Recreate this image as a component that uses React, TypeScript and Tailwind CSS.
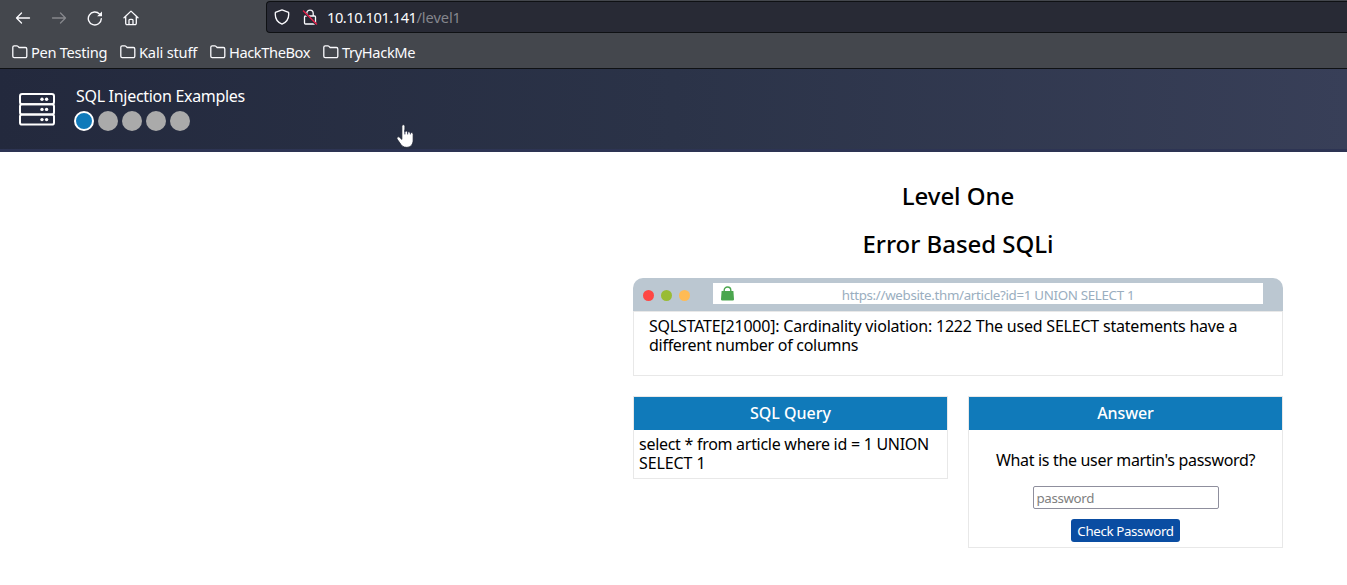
import React from 'react';

const strokeProps = {
  fill: 'none',
  stroke: '#fbfbfe',
  strokeWidth: 1.3,
  strokeLinecap: 'round' as const,
  strokeLinejoin: 'round' as const,
};

function ArrowIcon({ forward = false }: { forward?: boolean }) {
  return (
    <svg width="16" height="16" viewBox="0 0 16 16" {...strokeProps} stroke={forward ? '#86888c' : '#fbfbfe'}>
      {forward ? <path d="M1.500 8h13M9.500 3l5 5-5 5" /> : <path d="M14.500 8H1.500M6.500 3l-5 5 5 5" />}
    </svg>
  );
}

function ReloadIcon() {
  return (
    <svg width="16" height="16" viewBox="0 0 16 16" {...strokeProps} strokeWidth={1.4}>
      <path d="M14.300 8.700A6.500 6.500 0 1 1 12.600 4.100" />
      <path d="M15 1.400v4.900h-4.900z" fill="#fbfbfe" stroke="none" />
    </svg>
  );
}

function HomeIcon() {
  return (
    <svg width="16" height="16" viewBox="0 0 16 16" {...strokeProps}>
      <path d="M1 7.800 8 1.100l7 6.700M2.700 6.600v6.700A1.300 1.300 0 0 0 4 14.600h8a1.300 1.300 0 0 0 1.300-1.300V6.600" />
      <path d="M6 14.300v-4a.9.9 0 0 1 .9-.9h2.200a.9.9 0 0 1 .9.9v4" />
    </svg>
  );
}

function ShieldIcon() {
  return (
    <svg width="16" height="16" viewBox="0 0 16 16" {...strokeProps}>
      <path d="M8 .9 14.600 3.400c.6 4.800-1.300 9.500-6.600 11.800C2.700 12.900.8 8.200 1.400 3.400z" />
    </svg>
  );
}

function InsecureLockIcon() {
  return (
    <svg width="16" height="16" viewBox="0 0 16 16" {...strokeProps}>
      <path d="M4.800 7V4.300a3.200 3.200 0 0 1 6.400 0V7M3.500 7h9a1 1 0 0 1 1 1v6a1 1 0 0 1-1 1h-9a1 1 0 0 1-1-1V8a1 1 0 0 1 1-1z" />
      <path d="M2 3.200 14 15.200" stroke="#282a35" strokeWidth={2.200} />
      <path d="M1.500 2 14.500 15" stroke="#e2214b" strokeWidth={1.500} />
    </svg>
  );
}

function FolderIcon() {
  return (
    <svg width="16" height="14" viewBox="0 0 16 14" {...strokeProps} className="shrink-0">
      <path d="M.8 2.300a1.400 1.400 0 0 1 1.400-1.400h2.700c.5 0 .8.2 1.100.5l1.100 1.100h6.300a1.400 1.400 0 0 1 1.400 1.400v7.300a1.400 1.400 0 0 1-1.400 1.400H2.200A1.400 1.400 0 0 1 .8 11.200z" />
    </svg>
  );
}

function ServerIcon() {
  return (
    <svg width="36" height="33" viewBox="0 0 36 33" fill="none" stroke="#fff" strokeWidth="2" className="shrink-0">
      {[1, 11.2, 21.400].map((y) => (
        <g key={y}>
          <rect x="1" y={y} width="34" height="10.200" rx="2.200" />
          <g fill="#fff" stroke="none">
            <circle cx="23" cy={y + 5.200} r="1.700" />
            <circle cx="27.600" cy={y + 5.200} r="1.700" />
          </g>
        </g>
      ))}
    </svg>
  );
}

function BagLockIcon() {
  return (
    <svg width="13" height="15" viewBox="0 0 13 15" className="shrink-0">
      <path d="M3.200 6V4.300a3.300 3.300 0 0 1 6.600 0V6" fill="none" stroke="#4ba64e" strokeWidth="1.400" />
      <path d="M.6 5h11.800l.6 8.200a1.200 1.200 0 0 1-1.200 1.300H1.200A1.200 1.200 0 0 1 0 13.200z" fill="#4ba64e" />
    </svg>
  );
}

function HandCursor() {
  return (
    <svg width="20" height="25" viewBox="0 0 18 24" preserveAspectRatio="none" className="absolute left-[396px] top-[124px]">
      <path
        d="M5.300 2.200c0-2 2.700-2 2.700 0v5.300c.5-1 2.300-.9 2.500.4.600-.8 2.200-.6 2.400.7.800-.8 2.500-.3 2.500 1.200v5.700c0 4-2.200 6.900-5.900 6.900-3.200 0-4.500-1.700-6-4.200L1 14.500c-.9-1.600.9-2.900 2.200-1.700l2.100 2z"
        fill="#fff"
        stroke="#1b2030"
        strokeWidth=".7"
      />
      <path d="M8 5.500v4.500M10.500 6.500v3.500M12.900 7.500v2.500" stroke="#29304a" strokeWidth=".9" />
    </svg>
  );
}

const bookmarks = [
  { label: 'Pen Testing', style: 'w-[108px] tracking-[-0.3px]' },
  { label: 'Kali stuff', style: 'w-[90px] tracking-[-0.2px]' },
  { label: 'HackTheBox', style: 'w-[113px] tracking-[-0.42px]' },
  { label: 'TryHackMe', style: 'w-[100px] tracking-[-0.36px]' },
];

function BrowserChrome() {
  return (
    <div className="flex h-[69px] flex-col border-b border-[#0f1114] bg-[#44474d]">
      <div className="flex h-[34px] pt-px">
        <div className="flex w-[266px] items-center gap-[20px] pl-[15px]">
          <ArrowIcon />
          <ArrowIcon forward />
          <ReloadIcon />
          <HomeIcon />
        </div>
        <div className="flex h-8 flex-1 items-center rounded-l border border-r-0 border-[#0f1114] bg-[#282a35] pl-[7px]">
          <ShieldIcon />
          <span className="ml-[12px] flex">
            <InsecureLockIcon />
          </span>
          <span className="ml-[9px] text-[14.67px] tracking-[-0.47px] text-[#fbfbfe]">10.10.101.141</span>
          <span className="text-[14.67px] tracking-[-0.1px] text-[#85868d]">/level1</span>
        </div>
      </div>
      <div className="flex h-[34px] items-center pt-[2px] pl-[12px]">
        {bookmarks.map((b) => (
          <div key={b.label} className={`flex h-[22px] items-center gap-[3px] whitespace-nowrap text-[14.67px] leading-[22px] text-[#fbfbfe] ${b.style}`}>
            <FolderIcon />
            <span>{b.label}</span>
          </div>
        ))}
      </div>
    </div>
  );
}

function LevelHeader() {
  return (
    <header className="flex h-[83px] items-start border-b-[3px] border-[#2d3453] bg-linear-to-r from-[#23293d] via-[#2b3348] to-[#383f58] bg-origin-border pl-[19px]">
      <div className="pt-[24px]">
        <ServerIcon />
      </div>
      <div className="ml-[19px] pt-[16px]">
        <div className="pl-[2px] text-base leading-[23px] tracking-[-0.3px] text-white">SQL Injection Examples</div>
        <div className="mt-[3px] flex gap-1">
          <span className="size-5 rounded-full border-2 border-white bg-[#107aba]" />
          <span className="size-5 rounded-full bg-[#aaaaaa]" />
          <span className="size-5 rounded-full bg-[#aaaaaa]" />
          <span className="size-5 rounded-full bg-[#aaaaaa]" />
          <span className="size-5 rounded-full bg-[#aaaaaa]" />
        </div>
      </div>
    </header>
  );
}

function MockBrowser() {
  return (
    <section className="mt-[20px]">
      <div className="flex h-[33px] items-center rounded-t-[10px] bg-[#bbc7d1] pl-[10px]">
        <div className="flex w-[70px] gap-[7px] pt-[2px]">
          <span className="size-[11px] rounded-full bg-[#ff4744]" />
          <span className="size-[11px] rounded-full bg-[#99bc35]" />
          <span className="size-[11px] rounded-full bg-[#ffbb55]" />
        </div>
        <div className="mb-[3px] flex h-[21px] w-[550px] items-center bg-white pl-2">
          <BagLockIcon />
          <span className="flex-1 pt-[6px] pr-[21px] text-center text-[13.33px] leading-none tracking-[-0.32px] text-[#9aaec0]">
            https://website.thm/article?id=1 UNION SELECT 1
          </span>
        </div>
      </div>
      <div className="h-[65px] border border-[#e8e8e8] px-[15px] pt-[5px] text-base leading-[19px]">
        <p className="whitespace-nowrap tracking-[-0.21px]">
          SQLSTATE[21000]: Cardinality violation: 1222 The used SELECT statements have a
        </p>
        <p className="tracking-[-0.28px]">different number of columns</p>
      </div>
    </section>
  );
}

export default function App() {
  return (
    <div className="relative h-[585px] overflow-hidden bg-white font-['Noto_Sans',sans-serif] text-black">
      <BrowserChrome />
      <LevelHeader />
      <main className="ml-[633px] w-[650px] pt-[29px]">
        <h1 className="text-center text-2xl leading-[29px] font-medium tracking-[-0.05px]">Level One</h1>
        <h2 className="mt-[19px] text-center text-2xl leading-[29px] font-medium tracking-[-0.03px]">Error Based SQLi</h2>
        <MockBrowser />
        <div className="mt-[20px] flex items-start justify-between">
          <section className="h-[83px] w-[315px] border border-[#e8e8e8]">
            <h3 className="h-[33px] bg-[#107aba] pt-[1px] text-center leading-[31px] font-medium text-white">SQL Query</h3>
            <div className="px-[5px] pt-[5px] text-base leading-[19px] whitespace-nowrap">
              <p className="tracking-[-0.28px]">select * from article where id = 1 UNION</p>
              <p className="tracking-[-0.1px]">SELECT 1</p>
            </div>
          </section>
          <section className="flex h-[152px] w-[315px] flex-col items-center border border-[#e8e8e8]">
            <h3 className="h-[33px] w-full bg-[#107aba] pt-[1px] text-center leading-[31px] font-medium tracking-[-0.1px] text-white">Answer</h3>
            <p className="mt-[21px] leading-[19px] tracking-[-0.32px]">What is the user martin's password?</p>
            <input
              type="text"
              placeholder="password"
              className="mt-[16px] h-[23px] w-[186px] rounded-[2px] border border-[#8f8f9d] bg-white px-[3px] text-[13.33px] tracking-[-0.37px] placeholder:text-[#808080]"
            />
            <button className="mt-[10px] h-[23px] w-[109px] rounded-[3px] bg-[#0a4da2] pt-px text-[13.33px] leading-[23px] tracking-[-0.37px] whitespace-nowrap text-white">
              Check Password
            </button>
          </section>
        </div>
      </main>
      <HandCursor />
    </div>
  );
}
